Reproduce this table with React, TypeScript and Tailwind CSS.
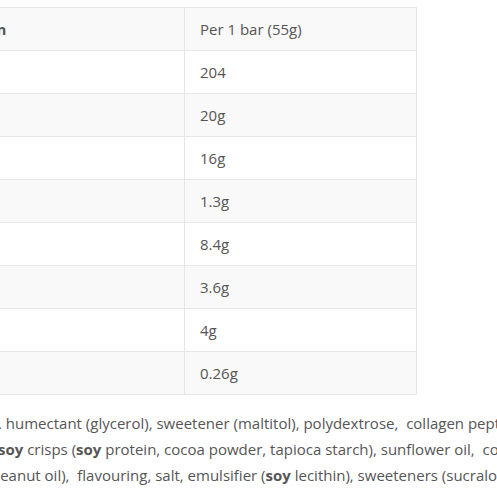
const rows = [
  { label: "Energy (kcal)", value: "204" },
  { label: "Protein", value: "20g" },
  { label: "Carbohydrate", value: "16g" },
  { label: "of which sugars", value: "1.3g" },
  { label: "Fat", value: "8.4g" },
  { label: "of which saturates", value: "3.6g" },
  { label: "Fibre", value: "4g" },
  { label: "Salt", value: "0.26g" },
];

export default function App() {
  return (
    <div className="h-[497px] w-[497px] overflow-hidden bg-white font-['Open_Sans',sans-serif] text-[15px] text-[#555]">
      <div className="ml-[-188px] pt-[7px]">
        <table className="w-[605px] border-collapse border border-[#e6e6e6]">
          <tbody>
            <tr className="h-[43px] bg-[#f9f9f9]">
              <td className="w-[372px] border border-[#e6e6e6] px-[15px] font-bold whitespace-nowrap">
                Nutritional Information
              </td>
              <td className="border border-[#e6e6e6] px-[15px]">Per 1 bar (55g)</td>
            </tr>
            {rows.map((row, i) => (
              <tr
                key={row.label}
                className={i % 2 === 1 ? "h-[43px] bg-[#f9f9f9]" : "h-[43px] bg-white"}
              >
                <td className="border border-[#e6e6e6] px-[15px] whitespace-nowrap">{row.label}</td>
                <td className="border border-[#e6e6e6] px-[15px]">{row.value}</td>
              </tr>
            ))}
          </tbody>
        </table>
      </div>

      <div className="mt-[15px] leading-[26px] whitespace-pre">
        <div className="ml-[-2px]">
          . humectant (glycerol), sweetener (maltitol), polydextrose,  collagen peptides, cocoa mass,
        </div>
        <div className="ml-[-2px]">
          <b>soy</b> crisps (<b>soy</b> protein, cocoa powder, tapioca starch), sunflower oil,  cocoa butter,
        </div>
        <div className="ml-[-9px]">
          peanut oil),  flavouring, salt, emulsifier (<b>soy</b> lecithin), sweeteners (sucralose, steviol)
        </div>
      </div>
    </div>
  );
}
